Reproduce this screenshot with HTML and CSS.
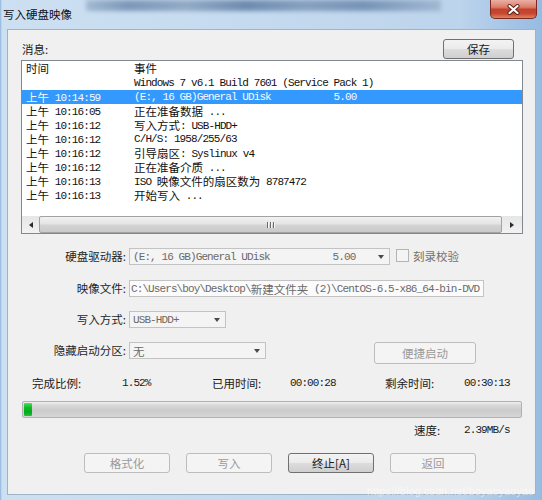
FILE: index.html
```html
<!DOCTYPE html>
<html lang="zh-CN">
<head>
<meta charset="utf-8">
<title>写入硬盘映像</title>
<link rel="stylesheet" href="styles.css">
</head>
<body>
<div class="window">
  <div class="titlebar">
    <div class="title">写入硬盘映像</div>
    <div class="glass"></div>
    <div class="close">
      <svg width="13" height="11" viewBox="0 0 13 11"><path d="M2.5 2 L10.5 9 M10.5 2 L2.5 9" stroke="#5a1c14" stroke-width="4" stroke-linecap="round"/><path d="M2.5 2 L10.5 9 M10.5 2 L2.5 9" stroke="#ffffff" stroke-width="2.2" stroke-linecap="round"/></svg>
    </div>
  </div>
  <div class="client">
    <div class="msg-head">
      <span class="lbl">消息:</span>
      <button class="btn">保存</button>
    </div>
    <div class="list">
      <div class="lrow head"><span class="tcol"><span class="c">时间</span></span><span class="ecol"><span class="c">事件</span></span></div>
      <div class="lrow"><span class="tcol"></span><span class="ecol">Windows 7 v6.1 Build 7601 (Service Pack 1)</span></div>
      <div class="lrow sel"><span class="tcol"><span class="c">上午</span> 10:14:59</span><span class="ecol">(E:, 16 GB)General UDisk           5.00</span></div>
      <div class="lrow"><span class="tcol"><span class="c">上午</span> 10:16:05</span><span class="ecol"><span class="c">正在准备数据</span> ...</span></div>
      <div class="lrow"><span class="tcol"><span class="c">上午</span> 10:16:12</span><span class="ecol"><span class="c">写入方式</span>: USB-HDD+</span></div>
      <div class="lrow"><span class="tcol"><span class="c">上午</span> 10:16:12</span><span class="ecol">C/H/S: 1958/255/63</span></div>
      <div class="lrow"><span class="tcol"><span class="c">上午</span> 10:16:12</span><span class="ecol"><span class="c">引导扇区</span>: Syslinux v4</span></div>
      <div class="lrow"><span class="tcol"><span class="c">上午</span> 10:16:12</span><span class="ecol"><span class="c">正在准备介质</span> ...</span></div>
      <div class="lrow"><span class="tcol"><span class="c">上午</span> 10:16:13</span><span class="ecol">ISO <span class="c">映像文件的扇区数为</span> 8787472</span></div>
      <div class="lrow"><span class="tcol"><span class="c">上午</span> 10:16:13</span><span class="ecol"><span class="c">开始写入</span> ...</span></div>
      <div class="spacer"></div>
      <div class="hscroll">
        <div class="sbtn"><span class="tri-left"></span></div>
        <div class="thumb"><span class="grip"></span><span class="grip"></span><span class="grip"></span></div>
        <div class="sbtn wide"><span class="tri-right"></span></div>
      </div>
    </div>

    <div class="form">
      <div class="frow">
        <span class="flabel">硬盘驱动器:</span>
        <div class="combo w260"><span class="m">(E:, 16 GB)General UDisk           5.00</span><span class="arrow"></span></div>
        <span class="check"></span>
        <span class="chklabel">刻录校验</span>
      </div>
      <div class="frow r2">
        <span class="flabel">映像文件:</span>
        <div class="field w354"><span class="m">C:\Users\boy\Desktop\</span><span class="c">新建文件夹</span><span class="m"> (2)\CentOS-6.5-x86_64-bin-DVD</span></div>
      </div>
      <div class="frow">
        <span class="flabel">写入方式:</span>
        <div class="combo w96"><span class="m">USB-HDD+</span><span class="arrow"></span></div>
      </div>
      <div class="frow">
        <span class="flabel">隐藏启动分区:</span>
        <div class="combo w136"><span class="c">无</span><span class="arrow"></span></div>
        <button class="btn dis quick">便捷启动</button>
      </div>
    </div>

    <div class="stats">
      <span class="s1">完成比例:</span>
      <span class="s2 m">1.52%</span>
      <span class="s3">已用时间:</span>
      <span class="s4 m">00:00:28</span>
      <span class="s5">剩余时间:</span>
      <span class="m">00:30:13</span>
    </div>

    <div class="progress"><div class="fill" style="width:1.52%"></div></div>

    <div class="speed">
      <span class="sp1">速度:</span>
      <span class="m">2.39MB/s</span>
    </div>

    <div class="actions">
      <button class="btn dis act">格式化</button>
      <button class="btn dis act">写入</button>
      <button class="btn act">终止[A]</button>
      <button class="btn dis act">返回</button>
    </div>
  </div>
  <div class="watermark">https://blog.csdn.net/boyaoyaoyao</div>
</div>
</body>
</html>
```

FILE: styles.css
```css
* { box-sizing: border-box; }

body {
  margin: 0;
  background: #bcd3ea;
}

.window {
  position: relative;
  width: 542px;
  height: 500px;
  display: flex;
  flex-direction: column;
  overflow: hidden;
  font-family: "Noto Sans CJK SC", sans-serif;
  background: linear-gradient(90deg, #8fb3da 0px, #cde0f2 2px, #c6dbef 40%, #bcd4ec 85%, #96bbe2 100%);
}

.titlebar {
  height: 29px;
  flex-shrink: 0;
  display: flex;
  align-items: flex-start;
}

.title {
  padding: 7px 0 0 3px;
  font-size: 11.5px;
  line-height: 14px;
  color: #101010;
  white-space: nowrap;
}

.glass {
  width: 355px;
  height: 11px;
  margin: 0 0 0 14px;
  background: linear-gradient(90deg, #9cb3cc 0%, #6f8caf 12%, #8aa2bf 28%, #5f7ea4 45%, #7d97b7 62%, #6a88ad 78%, #9db4ce 100%);
  filter: blur(2px);
  opacity: .85;
}

.close {
  margin-left: auto;
  margin-right: 5px;
  width: 47px;
  height: 19px;
  border: 1px solid #7a2a20;
  border-top: none;
  border-radius: 0 0 5px 5px;
  background: linear-gradient(#eab0a4 0%, #dc7c6a 40%, #c4412c 52%, #c7472f 75%, #e08363 100%);
  display: flex;
  align-items: center;
  justify-content: center;
}

.client {
  flex: 1;
  margin: 0 6px 5px 7px;
  border: 1px solid #9fb2c8;
  background: #f0f0f0;
  padding: 9px 12px 0 13px;
  display: flex;
  flex-direction: column;
  color: #1a1a1a;
}

.msg-head {
  height: 20px;
  display: flex;
  align-items: center;
  justify-content: space-between;
  padding: 0 9px 0 1px;
}

.lbl {
  font-size: 11.5px;
  line-height: 14px;
}

.btn {
  margin: 0;
  padding: 0;
  width: 71px;
  height: 20px;
  border: 1px solid #707070;
  border-radius: 3px;
  background: linear-gradient(#f3f3f3 0%, #ebebeb 48%, #dcdcdc 52%, #cfcfcf 100%);
  font-family: "Noto Sans CJK SC", sans-serif;
  font-size: 11.5px;
  line-height: 16px;
  color: #1a1a1a;
}

.btn.dis {
  border-color: #bdbdbd;
  background: #f4f4f4;
  color: #9a9a9a;
}

.m {
  font-family: "Liberation Mono", monospace;
  font-size: 11px;
  letter-spacing: -0.9px;
  white-space: pre;
}

.c {
  font-family: "Noto Sans CJK SC", sans-serif;
  font-size: 11.5px;
  letter-spacing: 0;
  vertical-align: -1px;
}

/* list view */
.list {
  margin-top: 1px;
  height: 174px;
  border: 1px solid #828790;
  background: #ffffff;
  display: flex;
  flex-direction: column;
  flex-shrink: 0;
}

.lrow {
  display: flex;
  height: 14px;
  line-height: 14px;
  font-family: "Liberation Mono", monospace;
  font-size: 11px;
  letter-spacing: -0.9px;
  white-space: pre;
  color: #111111;
}

.lrow .c {
  display: inline-block;
  height: 14px;
  line-height: 14px;
}

.lrow.head {
  height: 15px;
  line-height: 15px;
}

.tcol {
  width: 112px;
  flex-shrink: 0;
  padding-left: 4px;
}

.ecol {
  flex: 1;
}

.lrow.sel {
  background: #3399ff;
  color: #f4faff;
}

.spacer { flex: 1; }

.hscroll {
  height: 17px;
  display: flex;
  background: linear-gradient(#e6e6e6, #f2f2f2);
}

.sbtn {
  width: 17px;
  display: flex;
  align-items: center;
  justify-content: center;
}

.sbtn.wide { width: 20px; }

.tri-left {
  width: 0; height: 0;
  border-top: 3.5px solid transparent;
  border-bottom: 3.5px solid transparent;
  border-right: 4px solid #2b2b2b;
}

.tri-right {
  width: 0; height: 0;
  border-top: 3.5px solid transparent;
  border-bottom: 3.5px solid transparent;
  border-left: 4px solid #2b2b2b;
}

.thumb {
  flex: 1;
  border: 1px solid #a2a2a2;
  border-radius: 2px;
  background: linear-gradient(#f2f2f2 0%, #e4e4e4 45%, #d3d3d3 55%, #cacaca 100%);
  display: flex;
  align-items: center;
  justify-content: center;
  gap: 1px;
}

.grip {
  width: 1px;
  height: 6px;
  background: #6a6a6a;
  box-shadow: 1px 0 #f6f6f6;
  margin-right: 1px;
}

/* form */
.form {
  margin-top: 14px;
  display: flex;
  flex-direction: column;
  gap: 14px;
}

.frow {
  display: flex;
  align-items: flex-start;
}

.frow.r2 { margin-top: 1px; }

.flabel {
  width: 105px;
  margin-right: 3px;
  text-align: right;
  font-size: 11.5px;
  line-height: 17px;
  color: #1f1f1f;
  white-space: nowrap;
}

.combo,
.field {
  height: 17px;
  border: 1px solid #c3c3c3;
  background: #f4f4f4;
  display: flex;
  align-items: center;
  padding-left: 3px;
  color: #6a6a6a;
  overflow: hidden;
  white-space: nowrap;
  flex-shrink: 0;
}

.combo .c, .field .c { vertical-align: 0; }

.field {
  background: #fbfbfb;
  padding-left: 1px;
}

.w260 { width: 261px; }
.w354 { width: 355px; }
.w96 { width: 97px; }
.w136 { width: 137px; }

.arrow {
  margin-left: auto;
  margin-right: 5px;
  width: 0; height: 0;
  border-left: 3.5px solid transparent;
  border-right: 3.5px solid transparent;
  border-top: 4px solid #4a4a4a;
  flex-shrink: 0;
}

.check {
  width: 13px;
  height: 13px;
  margin: 1px 4px 0 6px;
  border: 1px solid #b5b5b5;
  background: #f4f4f4;
  flex-shrink: 0;
}

.chklabel {
  font-size: 11.5px;
  line-height: 17px;
  color: #707070;
}

.btn.quick {
  width: 102px;
  height: 22px;
  margin-left: 108px;
}

/* stats */
.stats {
  margin-top: 12px;
  height: 14px;
  line-height: 14px;
  display: flex;
  align-items: center;
  padding-left: 11px;
  font-size: 11.5px;
  white-space: nowrap;
}

.s1 { width: 90px; }
.s2 { width: 90px; }
.s3 { width: 78px; }
.s4 { width: 95px; }
.s5 { width: 79px; }

.progress {
  margin: 11px 0 0 1px;
  width: 500px;
  height: 17px;
  border: 1px solid #b2b2b2;
  border-radius: 2px;
  background: linear-gradient(#f0f0f0 0%, #dadada 20%, #cbcbcb 55%, #d6d6d6 100%);
  padding: 1px;
  display: flex;
}

.fill {
  height: 100%;
  min-width: 8px;
  background: linear-gradient(#45e05a 0%, #0cbc24 35%, #05a81d 70%, #20c23a 100%);
  border-radius: 1px;
}

.speed {
  margin-top: 5px;
  height: 14px;
  line-height: 14px;
  display: flex;
  align-items: center;
  padding-left: 393px;
  font-size: 11.5px;
  white-space: nowrap;
}

.sp1 { width: 50px; }

.actions {
  margin-top: 16px;
  display: flex;
  gap: 16px;
  padding-left: 63px;
}

.btn.act {
  width: 86px;
  height: 20px;
}

.watermark {
  position: absolute;
  right: 8px;
  bottom: 3px;
  font-family: "Liberation Sans", sans-serif;
  font-size: 11px;
  color: rgba(255, 255, 255, 0.55);
}
```
